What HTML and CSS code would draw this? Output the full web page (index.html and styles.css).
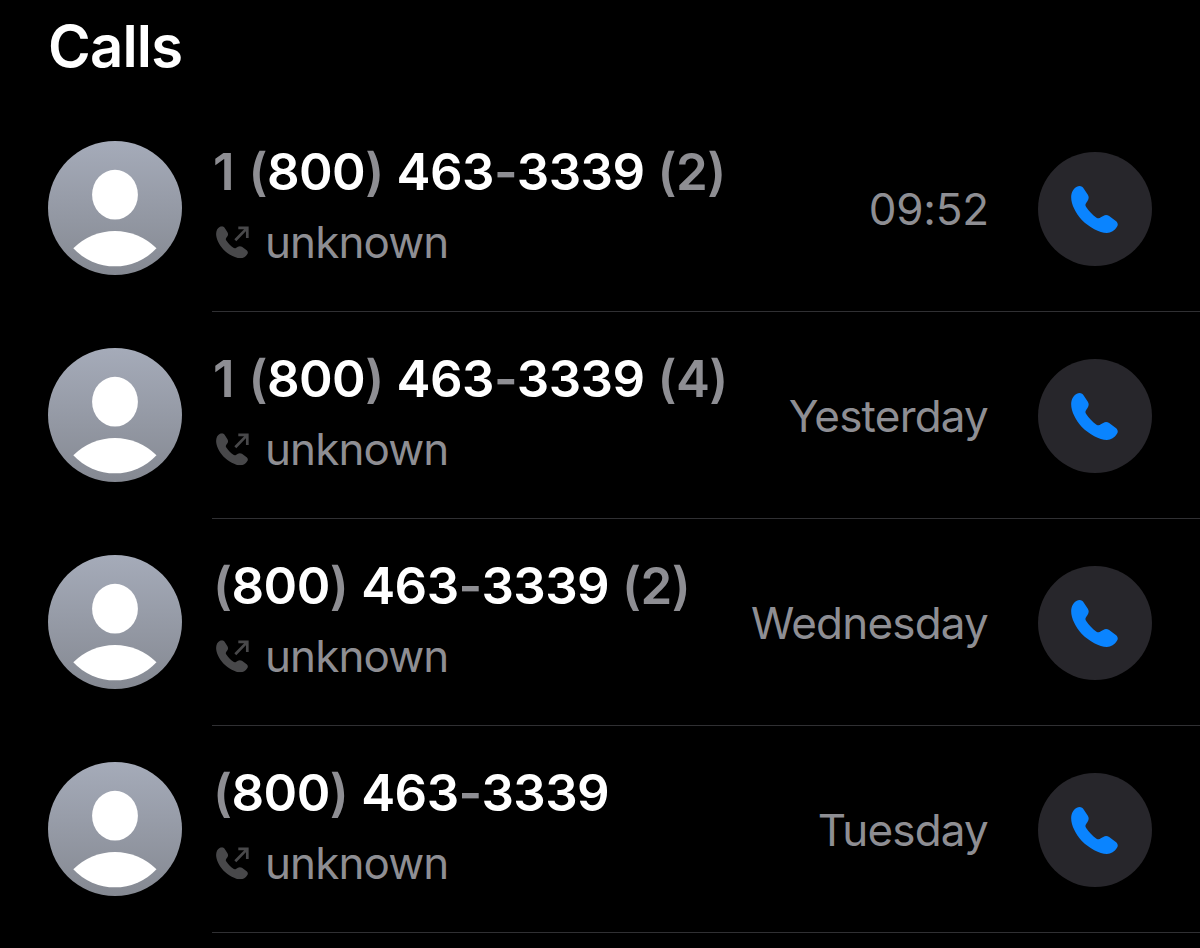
FILE: index.html
```html
<!DOCTYPE html>
<html lang="en">
<head>
    <meta charset="UTF-8">
    <meta name="viewport" content="width=device-width, initial-scale=1.0">
    <title>Calls</title>
    <link rel="stylesheet" href="styles.css">
</head>
<body>
    <svg class="sprite" width="0" height="0">
        <defs>
            <linearGradient id="avatarFill" x1="0" y1="0" x2="0" y2="1">
                <stop offset="0" stop-color="#a5abb9"/>
                <stop offset="1" stop-color="#858992"/>
            </linearGradient>
            <symbol id="avatar" viewBox="0 0 134 134">
                <circle cx="67" cy="67" r="67" fill="url(#avatarFill)"/>
                <ellipse cx="67" cy="53.7" rx="22.9" ry="24.9" fill="#fff"/>
                <path d="M25.3 107.3A58.4 58.4 0 0 1 108.5 107.3A57 57 0 0 1 25.3 107.3Z" fill="#fff"/>
            </symbol>
            <symbol id="phone" viewBox="125 123 140 141">
                <path d="M150 123C156 123 160 126 163 131L175 149C179 156 178 162 174 168L170 174C167 178 167 181 170 186C178 198 189 210 201 218C206 221 210 220 214 217L221 213C228 209 233 210 239 213L258 227C265 232 267 239 262 246C255 257 245 264 232 264C210 264 179 247 157 225C138 204 125 178 125 157C125 143 131 130 142 125C145 123.500 147 123 150 123Z"/>
            </symbol>
            <symbol id="outgoing" viewBox="0 0 33 33">
                <use href="#phone" x="0" y="0.300" width="32" height="32"/>
                <path d="M19.300 14.200L31.300 1.900M22.300 1.900H31.300V12" fill="none" stroke="currentColor" stroke-width="2.700"/>
            </symbol>
        </defs>
    </svg>

    <h1>Calls</h1>

    <ul class="calls">
        <li class="call">
            <svg class="avatar"><use href="#avatar"/></svg>
            <div class="details">
                <div class="info">
                    <p class="number"><span class="country">1</span> (<b>800</b>) <b>463</b>-<b>3339</b> (2)</p>
                    <p class="label"><svg class="outgoing"><use href="#outgoing"/></svg><span>unknown</span></p>
                </div>
                <span class="time clock">09:52</span>
                <button class="call-button"><svg><use href="#phone"/></svg></button>
            </div>
        </li>
        <li class="call">
            <svg class="avatar"><use href="#avatar"/></svg>
            <div class="details">
                <div class="info">
                    <p class="number"><span class="country">1</span> (<b>800</b>) <b>463</b>-<b>3339</b> (4)</p>
                    <p class="label"><svg class="outgoing"><use href="#outgoing"/></svg><span>unknown</span></p>
                </div>
                <span class="time">Yesterday</span>
                <button class="call-button"><svg><use href="#phone"/></svg></button>
            </div>
        </li>
        <li class="call">
            <svg class="avatar"><use href="#avatar"/></svg>
            <div class="details">
                <div class="info">
                    <p class="number">(<b>800</b>) <b>463</b>-<b>3339</b> (2)</p>
                    <p class="label"><svg class="outgoing"><use href="#outgoing"/></svg><span>unknown</span></p>
                </div>
                <span class="time">Wednesday</span>
                <button class="call-button"><svg><use href="#phone"/></svg></button>
            </div>
        </li>
        <li class="call">
            <svg class="avatar"><use href="#avatar"/></svg>
            <div class="details">
                <div class="info">
                    <p class="number">(<b>800</b>) <b>463</b>-<b>3339</b></p>
                    <p class="label"><svg class="outgoing"><use href="#outgoing"/></svg><span>unknown</span></p>
                </div>
                <span class="time">Tuesday</span>
                <button class="call-button"><svg><use href="#phone"/></svg></button>
            </div>
        </li>
    </ul>
</body>
</html>
```
FILE: styles.css
```css
* {
    box-sizing: border-box;
}
body {
    margin: 0;
    height: 948px;
    overflow: hidden;
    background-color: #000;
    color: #fff;
    font-family: Inter, sans-serif;
}
.sprite {
    display: block;
}
h1 {
    height: 105px;
    margin: 0;
    padding: 11px 0 0 48px;
    font-size: 58px;
    line-height: 70px;
    font-weight: 600;
    letter-spacing: -0.8px;
}
.calls {
    margin: 0;
    padding: 0;
    list-style: none;
}
.call {
    display: flex;
    height: 207px;
    padding-left: 48px;
}
.avatar {
    width: 134px;
    height: 134px;
    margin: 36px 30px 0 0;
    flex: none;
}
.details {
    display: flex;
    flex: 1;
    align-items: center;
    padding: 2px 48px 0 0;
    border-bottom: 1px solid #303033;
}
.info {
    flex: 1;
    align-self: flex-start;
    padding-top: 34px;
}
.number {
    margin: 0;
    padding-left: 1px;
    font-size: 51px;
    line-height: 62px;
    font-weight: 600;
    letter-spacing: -0.55px;
    word-spacing: 0.6px;
    color: #8e8e93;
    white-space: nowrap;
}
.number b {
    font-weight: 600;
    color: #fff;
}
.country {
    margin-right: 1.5px;
}
.label {
    display: flex;
    align-items: center;
    height: 54px;
    margin: 12px 0 0;
    padding-left: 4px;
    font-size: 44px;
    line-height: 54px;
    letter-spacing: -0.9px;
    color: #8e8e93;
}
.outgoing {
    width: 33px;
    height: 33px;
    margin-right: 16px;
    color: #48484a;
    fill: currentColor;
}
.time {
    margin-right: 50px;
    font-size: 44px;
    line-height: 54px;
    letter-spacing: -0.8px;
    color: #8e8e93;
}
.time.clock {
    margin-right: 49px;
    letter-spacing: -0.2px;
}
.call-button {
    display: flex;
    align-items: center;
    justify-content: center;
    width: 114px;
    height: 114px;
    padding: 0 1px 0 0;
    border: none;
    border-radius: 50%;
    background-color: #27262b;
    cursor: pointer;
}
.call-button svg {
    width: 47px;
    height: 47px;
    fill: #0a84ff;
}
```
